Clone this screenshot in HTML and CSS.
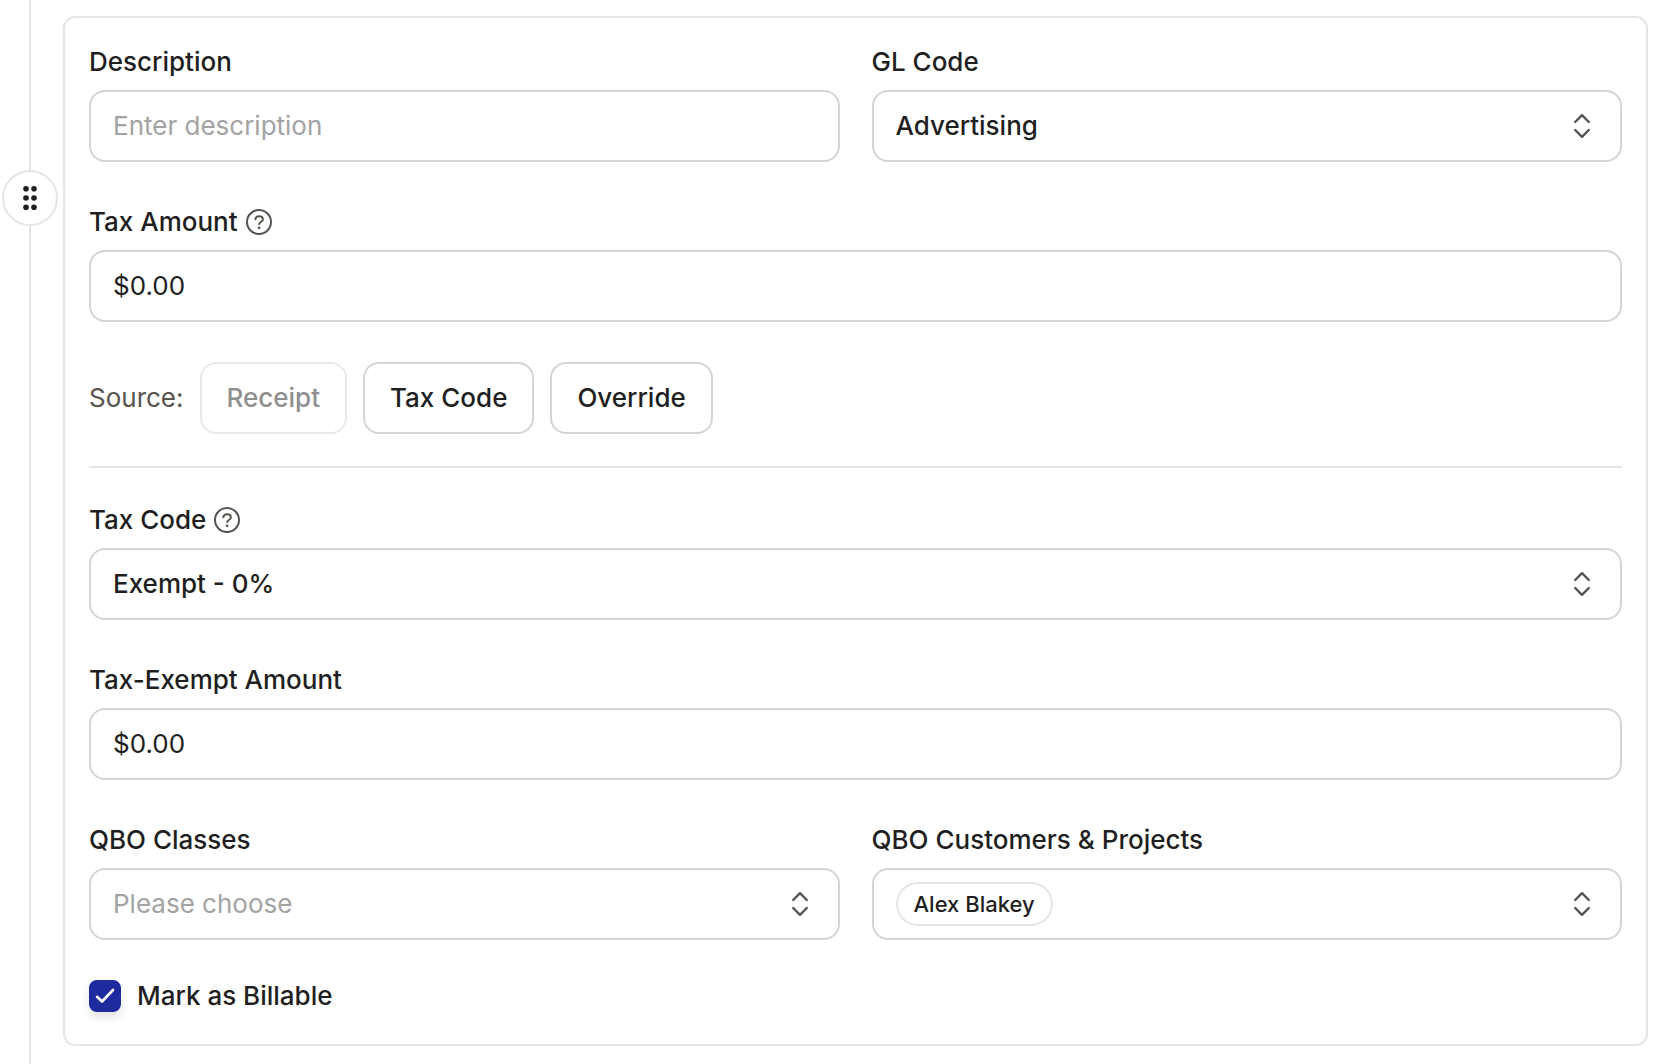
FILE: index.html
```html
<!DOCTYPE html>
<html lang="en">
<head>
    <meta charset="utf-8">
    <meta name="viewport" content="width=device-width, initial-scale=1">
    <title>Line item</title>
    <link rel="stylesheet" href="styles.css">
</head>
<body>
<!-- shared icons -->
<svg class="sprite" aria-hidden="true">
    <symbol id="chevrons" viewBox="0 0 24 32">
        <path d="M5.2 12 12 5.2 18.8 12M5.2 20 12 26.8 18.8 20"/>
    </symbol>
    <symbol id="help" viewBox="0 0 26 26">
        <circle cx="13" cy="13" r="12"/>
        <path d="M9.3 10.2C9.7 8.3 11.1 7.2 13 7.200c2.200 0 3.900 1.200 3.900 3.200 0 2.500-3.700 2.600-3.700 4.600"/>
        <circle class="dot" cx="13.1" cy="18.800" r="1.400"/>
    </symbol>
</svg>

<div class="line-item">
    <div class="rail">
        <button type="button" class="grip" aria-label="Reorder">
            <svg width="16" height="26" viewBox="0 0 16 26">
                <circle cx="4" cy="3.7" r="2.8"/><circle cx="12" cy="3.7" r="2.8"/>
                <circle cx="4" cy="13" r="2.8"/><circle cx="12" cy="13" r="2.8"/>
                <circle cx="4" cy="22.3" r="2.8"/><circle cx="12" cy="22.3" r="2.8"/>
            </svg>
        </button>
    </div>

    <form class="card">
        <div class="row">
            <div class="field">
                <div class="label"><label for="description">Description</label></div>
                <input class="control" type="text" id="description" placeholder="Enter description">
            </div>
            <div class="field">
                <div class="label"><label for="gl_code">GL Code</label></div>
                <div class="picker">
                    <select class="control" id="gl_code"><option>Advertising</option></select>
                    <svg class="chevrons"><use href="#chevrons"/></svg>
                </div>
            </div>
        </div>

        <div class="field">
            <div class="label">
                <label for="tax_amount">Tax Amount</label>
                <svg class="help"><use href="#help"/></svg>
            </div>
            <input class="control" type="text" id="tax_amount" value="$0.00">
        </div>

        <div class="source">
            <span>Source:</span>
            <button type="button" class="btn" disabled>Receipt</button>
            <button type="button" class="btn">Tax Code</button>
            <button type="button" class="btn">Override</button>
        </div>

        <hr class="divider">

        <div class="field">
            <div class="label">
                <label for="tax_code">Tax Code</label>
                <svg class="help"><use href="#help"/></svg>
            </div>
            <div class="picker">
                <select class="control" id="tax_code"><option>Exempt - 0%</option></select>
                <svg class="chevrons"><use href="#chevrons"/></svg>
            </div>
        </div>

        <div class="field">
            <div class="label"><label for="exempt_amount">Tax-Exempt Amount</label></div>
            <input class="control" type="text" id="exempt_amount" value="$0.00">
        </div>

        <div class="row">
            <div class="field">
                <div class="label"><label for="classes">QBO Classes</label></div>
                <div class="picker">
                    <select class="control empty" id="classes"><option>Please choose</option></select>
                    <svg class="chevrons"><use href="#chevrons"/></svg>
                </div>
            </div>
            <div class="field">
                <div class="label"><label for="customers">QBO Customers &amp; Projects</label></div>
                <div class="picker">
                    <button type="button" class="control multi" id="customers"><span class="chip">Alex Blakey</span></button>
                    <svg class="chevrons"><use href="#chevrons"/></svg>
                </div>
            </div>
        </div>

        <div class="check">
            <span class="box">
                <input type="checkbox" id="billable" checked>
                <svg class="tick" viewBox="0 0 32 32"><path d="M8 16.8 13 21.500 24 10"/></svg>
            </span>
            <label for="billable">Mark as Billable</label>
        </div>
    </form>
</div>
</body>
</html>
```
FILE: styles.css
```css
* {
    box-sizing: border-box;
}

body {
    margin: 0;
    background: #fff;
    color: #1f1f1f;
    font: 500 26px/40px Inter, "Liberation Sans", sans-serif;
}

button, input, select {
    margin: 0;
    font: inherit;
    color: inherit;
}

.sprite {
    display: none;
}

.line-item {
    display: flex;
    min-height: 100vh;
}

/* drag rail */
.rail {
    flex: none;
    width: 60px;
    padding: 170px 2px 0;
    background: linear-gradient(#e5e5e5, #e5e5e5) 29px 0 / 2px 100% no-repeat;
}

.grip {
    display: flex;
    align-items: center;
    justify-content: center;
    width: 56px;
    height: 56px;
    padding: 0;
    border: 2px solid #e5e5e5;
    border-radius: 50%;
    background: #fff;
    cursor: grab;
}

.grip svg {
    fill: #1f1f1f;
}

.card {
    flex: 1;
    display: flex;
    flex-direction: column;
    gap: 40px;
    margin: 16px 28px 18px 3px;
    padding: 24px 24px 32px;
    border: 2px solid #e5e5e5;
    border-radius: 12px;
}

.row {
    display: grid;
    grid-template-columns: 1fr 1fr;
    gap: 32px;
}

.field {
    display: flex;
    flex-direction: column;
    gap: 8px;
    min-width: 0;
}

.label {
    display: flex;
    align-items: center;
    gap: 8px;
}

.help {
    width: 26px;
    height: 26px;
    fill: none;
    stroke: #57534e;
    stroke-width: 2;
    stroke-linecap: round;
}

.dot {
    fill: #57534e;
    stroke: none;
}

.control {
    display: block;
    width: 100%;
    height: 72px;
    padding: 0 22px;
    border: 2px solid #d4d4d4;
    border-radius: 16px;
    background: #fff;
    appearance: none;
    text-align: left;
}

input.control {
    padding-bottom: 2px;
    font-weight: 400;
}

.control::placeholder {
    color: #a3a3a3;
    opacity: 1;
}

.control.empty {
    color: #a3a3a3;
    font-weight: 400;
}

.picker {
    position: relative;
}

.chevrons {
    position: absolute;
    top: 20px;
    right: 28px;
    width: 24px;
    height: 32px;
    fill: none;
    stroke: #57534e;
    stroke-width: 2.4;
    stroke-linecap: round;
    stroke-linejoin: round;
    pointer-events: none;
}

.multi {
    display: flex;
    align-items: center;
}

.chip {
    padding: 0 16px;
    border: 2px solid #e5e5e5;
    border-radius: 22px;
    font-size: 22px;
}

.source {
    display: flex;
    align-items: center;
    gap: 16px;
}

.source span {
    color: #57534e;
    font-weight: 400;
}

.btn {
    height: 72px;
    padding: 0 25px;
    border: 2px solid #d4d4d4;
    border-radius: 16px;
    background: #fff;
}

.btn:disabled {
    border-color: #e9e9e9;
    color: #8f8f8f;
}

.divider {
    width: 100%;
    height: 2px;
    margin: -8px 0;
    border: 0;
    background: #e5e5e5;
}

.check {
    display: flex;
    align-items: center;
    gap: 16px;
    line-height: 32px;
}

.box {
    position: relative;
    width: 32px;
    height: 32px;
}

.box input {
    display: block;
    width: 32px;
    height: 32px;
    border-radius: 8px;
    border: 2px solid #d4d4d4;
    appearance: none;
    box-shadow: 0 6px 10px rgba(0, 0, 0, 0.1);
}

.box input:checked {
    border-color: #1f2a9f;
    background: #1f2a9f;
}

.tick {
    position: absolute;
    inset: 0;
    fill: none;
    stroke: #fff;
    stroke-width: 2.6;
    stroke-linecap: round;
    stroke-linejoin: round;
    pointer-events: none;
}
```
